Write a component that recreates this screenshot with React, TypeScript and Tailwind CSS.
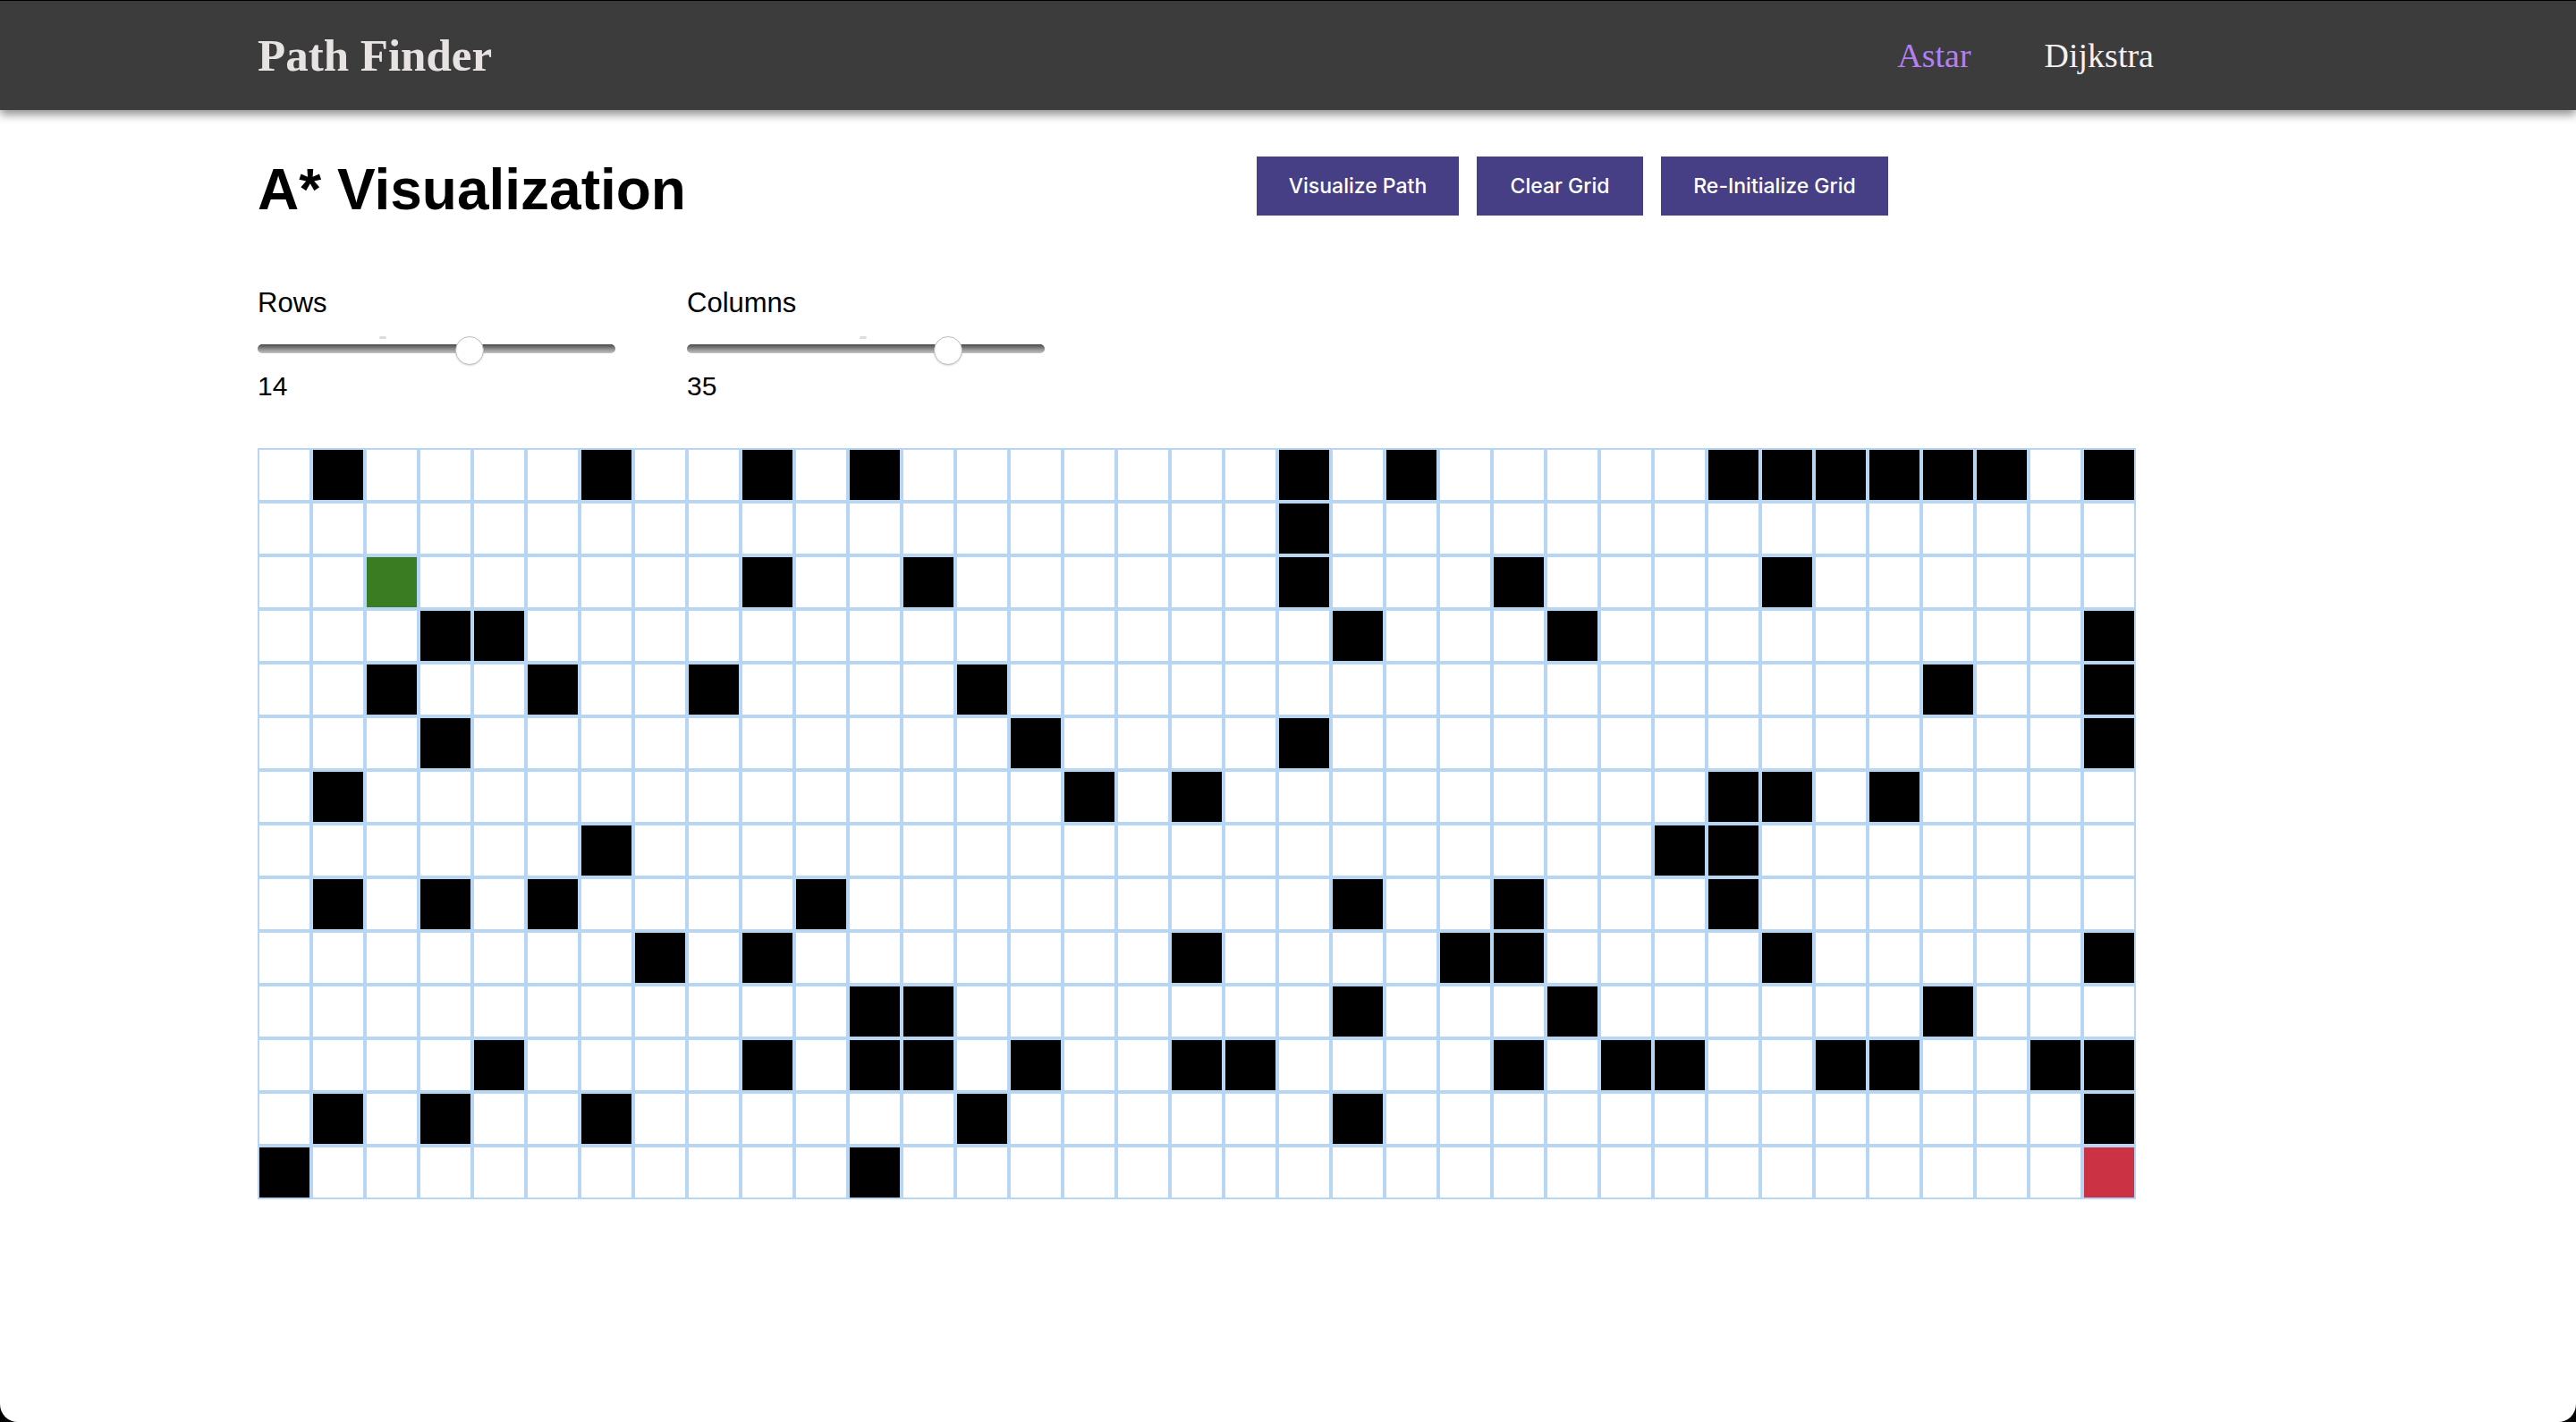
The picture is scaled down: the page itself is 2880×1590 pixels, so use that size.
import React from "react";

const ROWS = 14;
const COLS = 35;

const walls: Record<number, number[]> = {
  0: [1, 6, 9, 11, 19, 21, 27, 28, 29, 30, 31, 32, 34],
  1: [19],
  2: [9, 12, 19, 23, 28],
  3: [3, 4, 20, 24, 34],
  4: [2, 5, 8, 13, 31, 34],
  5: [3, 14, 19, 34],
  6: [1, 15, 17, 27, 28, 30],
  7: [6, 26, 27],
  8: [1, 3, 5, 10, 20, 23, 27],
  9: [7, 9, 17, 22, 23, 28, 34],
  10: [11, 12, 20, 24, 31],
  11: [4, 9, 11, 12, 14, 17, 18, 23, 25, 26, 29, 30, 33, 34],
  12: [1, 3, 6, 13, 20, 34],
  13: [0, 11],
};

function cellClass(r: number, c: number) {
  if (r === 2 && c === 2) return "bg-[#3a7c22]";
  if (r === 13 && c === 34) return "bg-[#cb3345]";
  if ((walls[r] || []).includes(c)) return "bg-black";
  return "bg-white";
}

function Slider({ label, value, fraction, tick }: { label: string; value: string; fraction: number; tick: number }) {
  const thumbLeft = fraction * (400 - 32);
  return (
    <div className="flex w-[400px] flex-col">
      <div className="text-[31px] leading-[30px] text-black" style={{ fontFamily: '"Liberation Sans", Arial, sans-serif' }}>
        {label}
      </div>
      <div className="relative mt-[22px] h-[32px] w-[400px]">
        <div className="absolute top-0 h-[3px] w-[8px] rounded-full bg-[#dcdcdc]" style={{ left: tick }} />
        <div className="absolute left-0 right-0 top-[9px] h-[10px] rounded-full bg-gradient-to-b from-[#4a4a4a] via-[#8a8a8a] to-[#c4c4c4]" />
        <div
          className="absolute top-0 h-[32px] w-[32px] rounded-full border border-[#bdbdbd] bg-white shadow-[0_1px_2px_rgba(0,0,0,0.15)]"
          style={{ left: thumbLeft }}
        />
      </div>
      <div className="mt-[9px] text-[30px] leading-[30px] text-black" style={{ fontFamily: '"Liberation Sans", Arial, sans-serif' }}>
        {value}
      </div>
    </div>
  );
}

export default function App() {
  const cells = [];
  for (let r = 0; r < ROWS; r++) {
    for (let c = 0; c < COLS; c++) {
      cells.push(
        <div key={`${r}-${c}`} className={`h-[60px] w-[60px] border-2 border-[#b7d6f4] ${cellClass(r, c)}`} />
      );
    }
  }

  return (
    <div className="h-[1590px] w-[2880px] overflow-hidden bg-black pt-[1px]">
      <div className="h-[1589px] w-full overflow-hidden rounded-b-[20px] bg-white">
        <header className="relative z-10 flex h-[122px] items-center bg-[#3c3c3c] pl-[288px] pr-[472px] shadow-[0_5px_10px_rgba(0,0,0,0.45)]">
          <div
            className="text-[51px] font-bold text-[#e7e3e3]"
            style={{ fontFamily: '"Liberation Serif", "Times New Roman", serif' }}
          >
            Path Finder
          </div>
          <nav
            className="ml-auto flex items-center gap-[82px] text-[38px]"
            style={{ fontFamily: '"Liberation Serif", "Times New Roman", serif' }}
          >
            <span className="text-[#b37ff1]">Astar</span>
            <span className="text-[#f3f1f1]">Dijkstra</span>
          </nav>
        </header>

        <main className="px-[288px]">
          <div className="mt-[52px] flex h-[72px] items-start">
            <div className="w-[1117px] pt-[5px]">
              <h1
                className="text-[64px] font-bold leading-[64px] text-black"
                style={{ fontFamily: '"Liberation Sans", Arial, sans-serif' }}
              >
                A* Visualization
              </h1>
            </div>
            <div className="flex gap-[20px]" style={{ fontFamily: "Inter, sans-serif" }}>
              <button className="h-[66px] w-[226px] bg-[#463f86] text-[23px] font-medium text-white">Visualize Path</button>
              <button className="h-[66px] w-[186px] bg-[#463f86] text-[23px] font-medium text-white">Clear Grid</button>
              <button className="h-[66px] w-[254px] bg-[#463f86] text-[23px] font-medium text-white">Re-Initialize Grid</button>
            </div>
          </div>

          <div className="mt-[77px] flex gap-[80px]">
            <Slider label="Rows" value="14" fraction={0.6} tick={136} />
            <Slider label="Columns" value="35" fraction={0.75} tick={193} />
          </div>

          <div className="mt-[54px] grid w-[2100px] grid-cols-[repeat(35,60px)]">{cells}</div>
        </main>
      </div>
    </div>
  );
}
